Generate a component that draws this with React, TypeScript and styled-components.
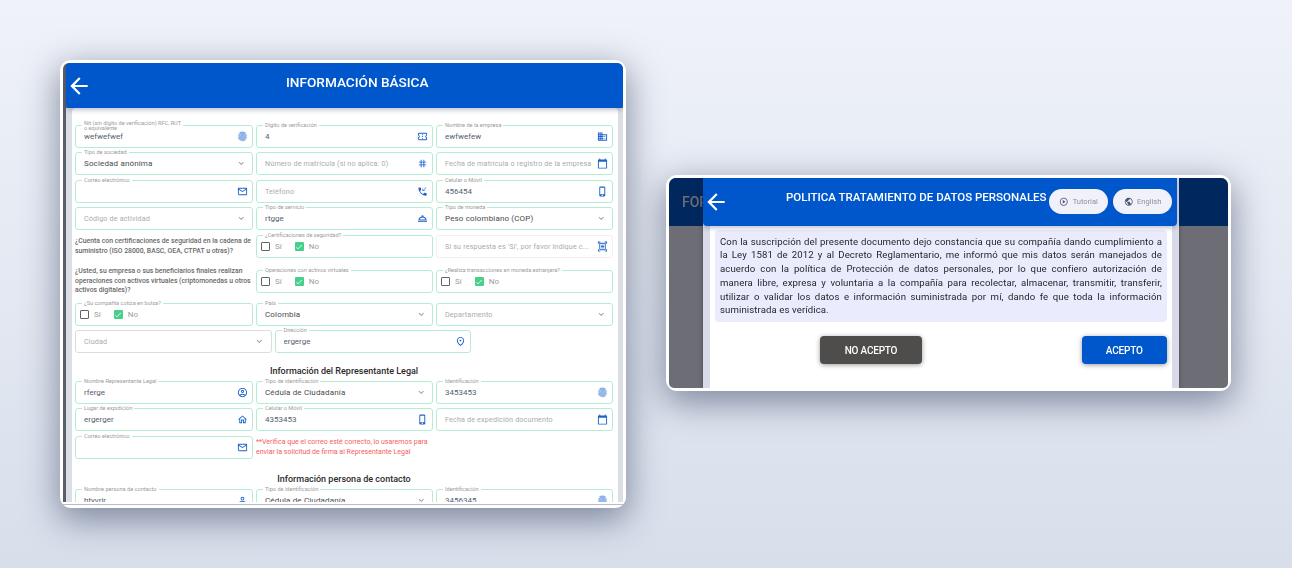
import React from 'react'
import styled, { createGlobalStyle } from 'styled-components'
import {
  MdArrowBack,
  MdBusiness,
  MdCalendarToday,
  MdCheck,
  MdFingerprint,
  MdKeyboardArrowDown,
  MdOutlineAccountCircle,
  MdOutlineConfirmationNumber,
  MdOutlineDocumentScanner,
  MdOutlineEmail,
  MdOutlineHome,
  MdOutlinePlace,
  MdOutlinePlayCircle,
  MdOutlineRoomService,
  MdPersonOutline,
  MdPhoneCallback,
  MdPhoneIphone,
  MdPublic,
  MdTag,
} from 'react-icons/md'

const GlobalStyle = createGlobalStyle`
  html, body {
    margin: 0;
    padding: 0;
    height: 100%;
    overflow: hidden;
    font-family: Roboto, "Liberation Sans", sans-serif;
  }
`

const Page = styled.div`
  width: 1292px;
  height: 568px;
  display: flex;
  align-items: flex-start;
  gap: 40px;
  padding-left: 60px;
  box-sizing: border-box;
  background: linear-gradient(180deg, #eff2f9 0%, #d8dfeb 100%);
`

const Card = styled.div<{ $top: number; $width: number; $height: number }>`
  width: ${props => props.$width}px;
  height: ${props => props.$height}px;
  margin-top: ${props => props.$top}px;
  flex: none;
  box-sizing: border-box;
  padding: 3px;
  background: #fff;
  border-radius: 11px;
  box-shadow: 0 10px 34px 2px rgba(60, 70, 100, 0.58);
`

const FormFrame = styled.div`
  height: 100%;
  padding-bottom: 2px;
  box-sizing: border-box;
  background: #fff;
  border-bottom: 1px solid #b9bcc4;
`

const FormScreen = styled.div`
  height: 100%;
  padding-left: 2.5px;
  box-sizing: border-box;
  overflow: hidden;
  background: #5a5e6b;
  border-radius: 6px 6px 0 0;
  filter: blur(0.3px);
`

const BlueHeader = styled.div<{ $height: number; $rounded?: boolean }>`
  position: relative;
  z-index: 1;
  height: ${props => props.$height}px;
  display: flex;
  align-items: center;
  color: #fff;
  background: #0057cc;
  border-radius: ${props => (props.$rounded ? '4px' : '0 0 4px 4px')};
  box-shadow: 0 2px 5px rgba(30, 50, 100, 0.3);
`

const BackArrow = styled(MdArrowBack)`
  flex: none;
  font-size: 26px;
  color: #fff;
`

const FormTitle = styled.h1`
  flex: 1;
  margin: 0 0 7px;
  font-size: 13.6px;
  font-weight: 500;
  text-align: center;
`

const SheetBack = styled.div`
  height: 100%;
  padding: 0 5px 0 6px;
  background: #dcdee6;
`

const Sheet = styled.div`
  height: 100%;
  padding: 17px 5px 0 3.5px;
  box-sizing: border-box;
  background: #fff;
  border-radius: 4px 4px 0 0;
`

const Row = styled.div<{ $columns?: string; $gap?: number }>`
  display: grid;
  grid-template-columns: ${props => props.$columns || '178px 177px 177px'};
  grid-template-rows: 23px;
  column-gap: 3px;
  align-items: center;
  margin-top: ${props => props.$gap ?? 4}px;
`

const FieldBox = styled.div<{ $tone?: 'mint' | 'grey' | 'pale'; $inset?: number }>`
  position: relative;
  height: 23px;
  box-sizing: border-box;
  display: flex;
  align-items: center;
  padding: 0 4px 0 ${props => props.$inset ?? 8}px;
  background: #fff;
  border-radius: 3px;
  border: 1px solid ${props => (props.$tone === 'grey' ? '#dcdcdc' : props.$tone === 'pale' ? '#f0f0f0' : '#b4edd4')};
`

const FieldLabel = styled.span<{ $twoLine?: boolean }>`
  position: absolute;
  left: 6px;
  top: ${props => (props.$twoLine ? -5.5 : -3)}px;
  padding: 0 2px;
  background: #fff;
  color: #9b9b9b;
  font-size: 5.6px;
  line-height: 5px;
  white-space: pre;
`

const FieldValue = styled.span<{ $dark?: boolean }>`
  flex: 1;
  min-width: 0;
  overflow: hidden;
  white-space: nowrap;
  color: ${props => (props.$dark ? '#4a4a4a' : '#566070')};
  font-size: 8px;
  letter-spacing: ${props => (props.$dark ? 0.15 : 0)}px;
`

const FieldPlaceholder = styled.span`
  flex: 1;
  min-width: 0;
  overflow: hidden;
  white-space: nowrap;
  color: #ababab;
  font-size: 7.2px;
  letter-spacing: 0.15px;
`

const FieldIcon = styled.span<{ $faded?: boolean }>`
  display: flex;
  flex: none;
  color: ${props => (props.$faded ? '#82ace8' : '#1c62cc')};
  font-size: 11px;

  path:not([fill='none']) {
    stroke: ${props => (props.$faded ? 'currentColor' : 'none')};
    stroke-width: ${props => (props.$faded ? 1.6 : 0)};
  }
`

const Chevron = styled(MdKeyboardArrowDown)`
  flex: none;
  margin-right: 2px;
  color: #999;
  font-size: 10.5px;
`

const Question = styled.p`
  margin: 0;
  color: #686868;
  font-size: 6.85px;
  font-weight: 500;
  line-height: 9.5px;
`

const CheckLine = styled.div`
  display: flex;
  align-items: center;
  gap: 5px;
  color: #9c9c9c;
  font-size: 8px;
`

const CheckBoxMark = styled.span<{ $on?: boolean }>`
  width: 9px;
  height: 9px;
  box-sizing: border-box;
  display: flex;
  align-items: center;
  justify-content: center;
  color: #fff;
  font-size: 8px;
  border-radius: 1px;
  border: ${props => (props.$on ? 'none' : '1px solid #62626c')};
  background: ${props => (props.$on ? '#47cf8b' : '#fff')};
`

const CheckSpacer = styled.span`
  width: 3px;
`

const SectionHeading = styled.h2<{ $top: number }>`
  margin: ${props => props.$top}px 0 0;
  height: 11px;
  color: #2b2b2b;
  font-size: 9px;
  font-weight: 500;
  line-height: 11px;
  text-align: center;
`

const RedNote = styled.p`
  grid-column: span 2;
  margin: 0;
  color: #f55d5d;
  font-size: 7px;
  line-height: 9.5px;
`

const PolicyScreen = styled.div`
  position: relative;
  height: 100%;
  overflow: hidden;
  display: flex;
  background: #6c6d75;
  border-radius: 7px 7px 5px 5px;
  filter: blur(0.3px);
`

const BackdropSide = styled.div<{ $width: number }>`
  flex: none;
  width: ${props => props.$width}px;
`

const BackdropBar = styled.div`
  height: 48px;
  display: flex;
  align-items: center;
  padding-left: 13px;
  overflow: hidden;
  background: #00285f;
  color: #6c6d75;
  font-size: 14px;
  font-weight: 500;
  white-space: nowrap;
`

const PolicyModal = styled.div`
  flex: none;
  width: 476px;
  background: #d8dae8;
  box-shadow: 0 0 4px rgba(20, 20, 40, 0.4);
`

const PolicyHead = styled(BlueHeader)`
  margin-right: 2px;
`

const PolicyTitle = styled.h1`
  position: absolute;
  top: 12px;
  left: 0;
  right: 0;
  margin: 0;
  padding-left: 83px;
  font-size: 11.5px;
  font-weight: 500;
  line-height: 14px;
  white-space: nowrap;
`

const PolicyActions = styled.div`
  position: absolute;
  top: 11px;
  right: 5px;
  display: flex;
  gap: 5px;
`

const Pill = styled.div`
  width: 59px;
  height: 25px;
  box-sizing: border-box;
  display: flex;
  align-items: center;
  justify-content: center;
  gap: 4px;
  color: #8c8fa6;
  background: #f1f1f9;
  border-radius: 13px;
  font-size: 7.5px;
`

const PillIcon = styled.span`
  display: flex;
  color: #4a5478;
  font-size: 9.5px;
`

const PolicyBack = styled.div`
  height: 162px;
  padding: 0 7px;
`

const PolicySheet = styled.div`
  height: 100%;
  padding: 3.5px 5px 0;
  box-sizing: border-box;
  background: #fff;
`

const PolicyText = styled.p`
  margin: 0;
  padding: 5px;
  color: #26262c;
  background: #eaebfd;
  border-radius: 4px;
  font-size: 9.6px;
  letter-spacing: 0.1px;
  line-height: 13.8px;
  text-align: justify;
`

const ButtonRow = styled.div`
  display: flex;
  justify-content: space-between;
  margin-top: 14px;
  padding-left: 105px;
`

const ActionButton = styled.button<{ $primary?: boolean }>`
  width: ${props => (props.$primary ? 85.5 : 102)}px;
  height: 27.5px;
  padding: 0;
  border: none;
  border-radius: 4px;
  color: #fff;
  background: ${props => (props.$primary ? '#0057cc' : '#4f4c4c')};
  font-family: inherit;
  font-size: 10px;
  font-weight: 500;
  letter-spacing: -0.2px;
  box-shadow: 0 1px 5px rgba(0, 0, 0, 0.4);
`

type FieldProps = {
  label?: string
  value?: string
  placeholder?: string
  icon?: React.ReactNode
  faded?: boolean
  select?: boolean
  twoLine?: boolean
  tone?: 'mint' | 'grey' | 'pale'
}

const Field = ({ label, value, placeholder, icon, faded, select, twoLine, tone }: FieldProps) => (
  <FieldBox $tone={tone}>
    {label && <FieldLabel $twoLine={twoLine}>{label}</FieldLabel>}
    {value || !placeholder
      ? <FieldValue $dark={select}>{value}</FieldValue>
      : <FieldPlaceholder>{placeholder}</FieldPlaceholder>}
    {select && <Chevron />}
    {icon && <FieldIcon $faded={faded}>{icon}</FieldIcon>}
  </FieldBox>
)

const YesNo = ({ label }: { label: string }) => (
  <FieldBox $inset={4}>
    <FieldLabel>{label}</FieldLabel>
    <CheckLine>
      <CheckBoxMark />
      <span>Sí</span>
      <CheckSpacer />
      <CheckBoxMark $on><MdCheck /></CheckBoxMark>
      <span>No</span>
    </CheckLine>
  </FieldBox>
)

const App: React.FC = () => (
  <Page>
    <GlobalStyle />

    <Card $top={60} $width={566} $height={448}>
      <FormFrame>
        <FormScreen>
          <BlueHeader $height={45} $rounded>
            <BackArrow />
            <FormTitle>INFORMACIÓN BÁSICA</FormTitle>
          </BlueHeader>
          <SheetBack>
            <Sheet>
              <Row $gap={0}>
                <Field label={'Nit (sin dígito de verificación) RFC, RUT\no equivalente'} twoLine value="wefwefwef" icon={<MdFingerprint />} faded />
                <Field label="Dígito de verificación" value="4" icon={<MdOutlineConfirmationNumber />} />
                <Field label="Nombre de la empresa" value="ewfwefew" icon={<MdBusiness />} />
              </Row>
              <Row>
                <Field label="Tipo de sociedad" value="Sociedad anónima" select />
                <Field placeholder="Número de matrícula (si no aplica: 0)" icon={<MdTag />} />
                <Field placeholder="Fecha de matrícula o registro de la empresa" icon={<MdCalendarToday />} />
              </Row>
              <Row $gap={5}>
                <Field label="Correo electrónico" icon={<MdOutlineEmail />} />
                <Field placeholder="Teléfono" icon={<MdPhoneCallback />} />
                <Field label="Celular o Móvil" value="456454" icon={<MdPhoneIphone />} />
              </Row>
              <Row>
                <Field placeholder="Código de actividad" select />
                <Field label="Tipo de servicio" value="rtgge" icon={<MdOutlineRoomService />} />
                <Field label="Tipo de moneda" value="Peso colombiano (COP)" select />
              </Row>
              <Row $gap={5}>
                <Question>¿Cuenta con certificaciones de seguridad en la cadena de suministro (ISO 28000, BASC, OEA, CTPAT u otras)?</Question>
                <YesNo label="¿Certificaciones de seguridad?" />
                <Field placeholder="Si su respuesta es 'Sí', por favor indique c..." icon={<MdOutlineDocumentScanner />} tone="pale" />
              </Row>
              <Row $gap={12}>
                <Question>¿Usted, su empresa o sus beneficiarios finales realizan operaciones con activos virtuales (criptomonedas u otros activos digitales)?</Question>
                <YesNo label="Operaciones con activos virtuales" />
                <YesNo label="¿Realiza transacciones en moneda extranjera?" />
              </Row>
              <Row $gap={10}>
                <YesNo label="¿Su compañía cotiza en bolsa?" />
                <Field label="País" value="Colombia" select />
                <Field placeholder="Departamento" select />
              </Row>
              <Row $columns="196.5px 196.5px" $gap={4}>
                <Field placeholder="Ciudad" select tone="grey" />
                <Field label="Dirección" value="ergerge" icon={<MdOutlinePlace />} />
              </Row>
              <SectionHeading $top={12.5}>Información del Representante Legal</SectionHeading>
              <Row $gap={4.5}>
                <Field label="Nombre Representante Legal" value="rferge" icon={<MdOutlineAccountCircle />} />
                <Field label="Tipo de identificación" value="Cédula de Ciudadanía" select />
                <Field label="Identificación" value="3453453" icon={<MdFingerprint />} faded />
              </Row>
              <Row $gap={4}>
                <Field label="Lugar de expidición" value="ergerger" icon={<MdOutlineHome />} />
                <Field label="Celular o Móvil" value="4353453" icon={<MdPhoneIphone />} />
                <Field placeholder="Fecha de expedición documento" icon={<MdCalendarToday />} />
              </Row>
              <Row $gap={5}>
                <Field label="Correo electrónico" icon={<MdOutlineEmail />} />
                <RedNote>**Verifica que el correo esté correcto, lo usaremos para<br />enviar la solicitud de firma al Representante Legal</RedNote>
              </Row>
              <SectionHeading $top={14.5}>Información persona de contacto</SectionHeading>
              <Row $gap={4.5}>
                <Field label="Nombre persona de contacto" value="htyvrir" icon={<MdPersonOutline />} />
                <Field label="Tipo de identificación" value="Cédula de Ciudadanía" select />
                <Field label="Identificación" value="3456345" icon={<MdFingerprint />} faded />
              </Row>
            </Sheet>
          </SheetBack>
        </FormScreen>
      </FormFrame>
    </Card>

    <Card $top={175} $width={565} $height={216}>
      <PolicyScreen>
        <BackdropSide $width={34}>
          <BackdropBar>FORMULARIO</BackdropBar>
        </BackdropSide>
        <PolicyModal>
          <PolicyHead $height={48}>
            <BackArrow />
            <PolicyTitle>POLITICA TRATAMIENTO DE DATOS PERSONALES</PolicyTitle>
            <PolicyActions>
              <Pill><PillIcon><MdOutlinePlayCircle /></PillIcon>Tutorial</Pill>
              <Pill><PillIcon><MdPublic /></PillIcon>English</Pill>
            </PolicyActions>
          </PolicyHead>
          <PolicyBack>
            <PolicySheet>
              <PolicyText>
                Con la suscripción del presente documento dejo constancia que su compañía dando cumplimiento a la Ley 1581 de 2012 y al Decreto Reglamentario, me informó que mis datos serán manejados de acuerdo con la política de Protección de datos personales, por lo que confiero autorización de manera libre, expresa y voluntaria a la compañía para recolectar, almacenar, transmitir, transferir, utilizar o validar los datos e información suministrada por mí, dando fe que toda la información suministrada es verídica.
              </PolicyText>
              <ButtonRow>
                <ActionButton>NO ACEPTO</ActionButton>
                <ActionButton $primary>ACEPTO</ActionButton>
              </ButtonRow>
            </PolicySheet>
          </PolicyBack>
        </PolicyModal>
        <BackdropSide $width={50}>
          <BackdropBar />
        </BackdropSide>
      </PolicyScreen>
    </Card>
  </Page>
)

export default App
